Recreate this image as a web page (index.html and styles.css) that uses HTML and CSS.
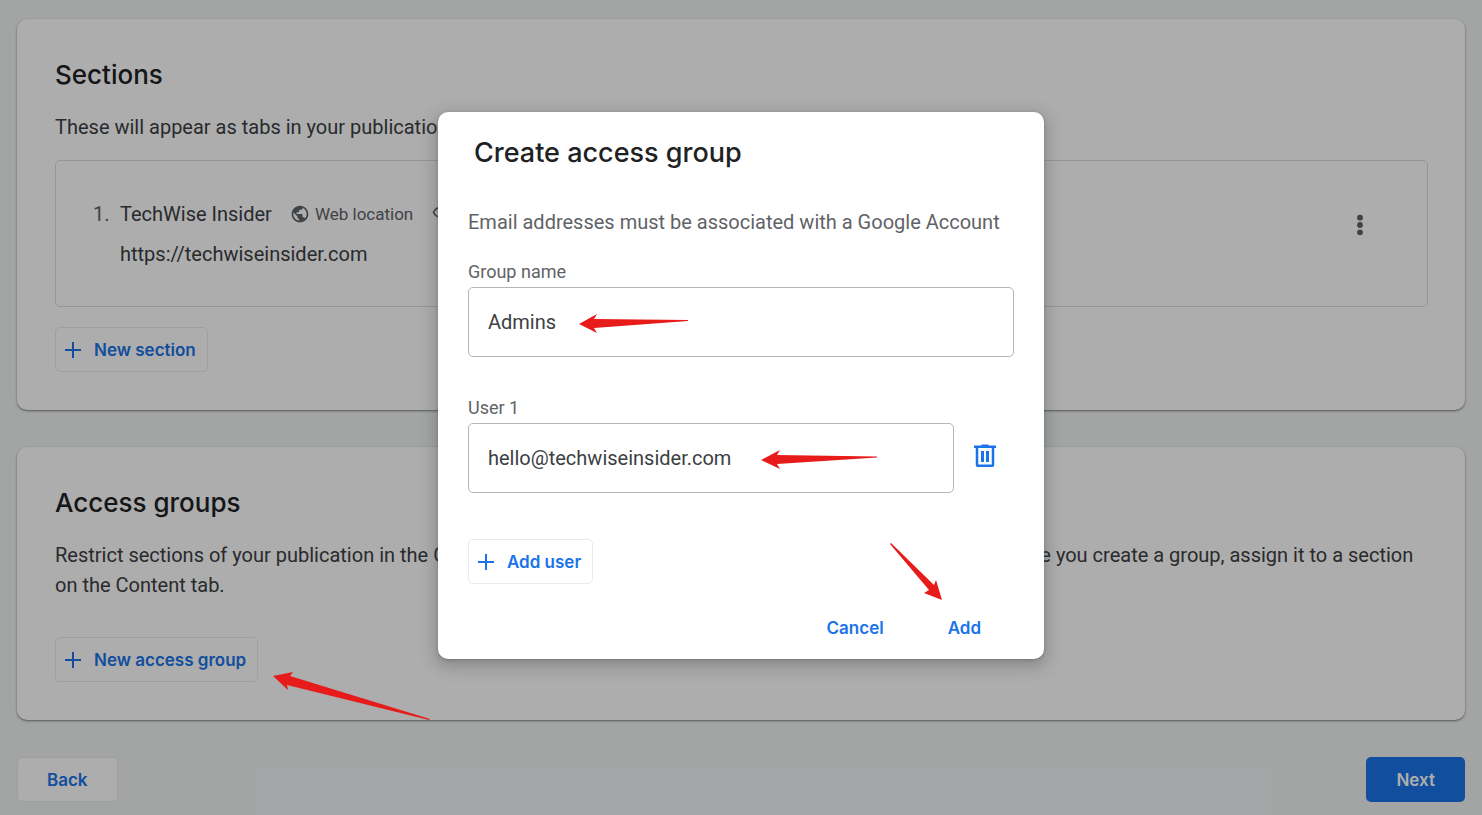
FILE: index.html
```html
<!DOCTYPE html>
<html lang="en">
<head>
<meta charset="utf-8">
<title>Publication settings</title>
<link rel="stylesheet" href="styles.css">
</head>
<body>
<main class="page">
  <section class="card">
    <h2 class="heading">Sections</h2>
    <p class="text">These will appear as tabs in your publication.</p>
    <div class="section-item">
      <span class="number">1.</span>
      <div class="section-info">
        <div class="section-line">
          <span class="section-name">TechWise Insider</span>
          <span class="meta">
            <svg class="meta-icon" viewBox="0 0 24 24"><path fill="currentColor" d="M12 2C6.48 2 2 6.48 2 12s4.48 10 10 10 10-4.48 10-10S17.52 2 12 2zm-1 17.93c-3.95-.49-7-3.85-7-7.93 0-.62.08-1.21.21-1.79L9 15v1c0 1.100.9 2 2 2v1.930zm6.900-2.540c-.26-.81-1-1.390-1.900-1.390h-1v-3c0-.55-.45-1-1-1H8v-2h2c.55 0 1-.45 1-1V7h2c1.100 0 2-.9 2-2v-.41c2.930 1.190 5 4.060 5 7.410 0 2.080-.8 3.970-2.100 5.390z"/></svg>
            Web location
          </span>
          <span class="meta">
            <svg class="meta-icon" viewBox="0 0 24 24"><path fill="none" stroke="currentColor" stroke-width="2" d="M3 10C5 6 8 4 12 4s7 2 9 6c-2 4-5 6-9 6s-7-2-9-6z"/><circle cx="12" cy="10" r="3" fill="currentColor"/></svg>
          </span>
        </div>
        <div class="section-name">https://techwiseinsider.com</div>
      </div>
      <button class="more" type="button" aria-label="More options">
        <svg class="more-icon" viewBox="0 0 24 24"><g fill="currentColor"><circle cx="12" cy="4" r="3.200"/><circle cx="12" cy="12" r="3.200"/><circle cx="12" cy="20" r="3.200"/></g></svg>
      </button>
    </div>
    <button class="button outlined with-icon" type="button">
      <svg class="plus" viewBox="0 0 16 16"><path d="M8 0v16M0 8h16" stroke="currentColor" stroke-width="2"/></svg>New section
    </button>
  </section>

  <section class="card">
    <h2 class="heading">Access groups</h2>
    <p class="text access-text">Restrict sections of your publication in the Google News app to a special group of people or invited testers. Once you create a group, assign it to a section on the Content tab.</p>
    <button class="button outlined with-icon" type="button">
      <svg class="plus" viewBox="0 0 16 16"><path d="M8 0v16M0 8h16" stroke="currentColor" stroke-width="2"/></svg>New access group
    </button>
  </section>

  <footer class="footer">
    <button class="button outlined" type="button">Back</button>
    <button class="button primary" type="button">Next</button>
  </footer>
</main>

<div class="overlay">
  <form class="dialog" role="dialog" aria-labelledby="dialog-title">
    <h2 class="heading dialog-title" id="dialog-title">Create access group</h2>
    <p class="text dialog-text">Email addresses must be associated with a Google Account</p>
    <label class="label" for="group">Group name</label>
    <div class="field-row">
      <input class="input" id="group" type="text" value="Admins">
      <svg class="arrow arrow-group" viewBox="0 0 110 20"><path d="M0 11 18 1 15 6 109 7 109 8 15 15 18 20Z"/></svg>
    </div>
    <label class="label user-label" for="user">User 1</label>
    <div class="field-row">
      <input class="input" id="user" type="email" value="hello@techwiseinsider.com">
      <button class="delete" type="button" aria-label="Remove user">
        <svg class="trash" viewBox="0 0 22 24"><path fill="none" stroke="currentColor" stroke-width="2.500" d="M3 3.500V20.500Q3 21.800 4.300 21.800H17.700Q19 21.800 19 20.500V3.500"/><path fill="currentColor" d="M0 1.500H7L8 .5H14L15 1.500H22V4H0ZM7 7H10V18H7ZM12 7H15V18H12Z"/></svg>
      </button>
      <svg class="arrow arrow-user" viewBox="0 0 116 20"><path d="M0 11 19 1 16 6 116 7.500 116 8.500 16 15 19 20Z"/></svg>
    </div>
    <button class="button outlined with-icon add-user" type="button">
      <svg class="plus" viewBox="0 0 16 16"><path d="M8 0v16M0 8h16" stroke="currentColor" stroke-width="2"/></svg>Add user
    </button>
    <div class="actions">
      <button class="button flat" type="button">Cancel</button>
      <button class="button flat" type="submit">Add</button>
      <svg class="arrow arrow-add" viewBox="0 0 52 57"><path d="M0 1 1 0 44 42 46 37 52 57 34 50 39 47Z"/></svg>
    </div>
  </form>
</div>
<svg class="arrow arrow-new" viewBox="0 0 158 50"><path d="M0 5 20 1 17 5 157 48 156 49 14 14 15 19Z"/></svg>
</body>
</html>
```
FILE: styles.css
```css
* { box-sizing: border-box; }

body {
  margin: 0;
  position: relative;
  background: #f1f3f4;
  color: #3c4043;
  font-family: Roboto, "Liberation Sans", sans-serif;
  font-size: 20px;
}

svg { display: block; flex: none; }

.page {
  display: flex;
  flex-direction: column;
  gap: 37px;
  padding: 19px 17px 13px;
}

.card {
  padding: 37px 37px 38px 38px;
  border-radius: 10px;
  background: #fff;
  box-shadow: 0 1px 2px rgba(60, 64, 67, .5), 0 1px 3px rgba(60, 64, 67, .2);
}

.heading {
  margin: 0;
  color: #202124;
  font: 500 26px/38px Inter, sans-serif;
}

.text {
  margin: 18px 0;
  line-height: 30px;
}

.access-text { margin-bottom: 37px; }

.section-item {
  display: flex;
  align-items: flex-start;
  margin-bottom: 20px;
  padding: 33px 46px 32px 37px;
  border: 1px solid #dadce0;
  border-radius: 5px;
  line-height: 40px;
}

.number {
  width: 27px;
  color: #5f6368;
}

.section-info { flex: 1; }

.section-line {
  display: flex;
  gap: 18px;
}

.meta {
  display: flex;
  align-items: center;
  gap: 5px;
  color: #5f6368;
  font-size: 17px;
}

.meta-icon {
  width: 20px;
  height: 20px;
}

.more {
  margin-top: 10px;
  padding: 10px;
  border: 0;
  background: none;
  color: #5f6368;
}

.more-icon {
  width: 22px;
  height: 22px;
}

.button {
  height: 45px;
  padding: 0 29px;
  border: 1px solid transparent;
  border-radius: 5px;
  background: none;
  color: #1a73e8;
  font: 600 17px/24px Inter, sans-serif;
}

.outlined {
  border-color: #e8eaed;
  background: #fff;
}

.with-icon {
  display: flex;
  align-items: center;
  gap: 13px;
  padding: 0 11px 0 9px;
}

.plus {
  width: 16px;
  height: 16px;
}

.primary {
  background: #1a73e8;
  color: #fff;
}

.footer {
  display: flex;
  justify-content: space-between;
}

.overlay {
  position: absolute;
  inset: 0;
  display: flex;
  justify-content: center;
  align-items: flex-start;
  padding-top: 112px;
  background: rgba(0, 0, 0, .32);
}

.dialog {
  width: 606px;
  padding: 22px 30px 9px;
  border-radius: 10px;
  background: #fff;
  box-shadow: 0 1px 3px rgba(60, 64, 67, .3), 0 5px 15px 3px rgba(60, 64, 67, .3);
}

.dialog-title {
  padding-left: 6px;
  font-size: 27px;
}

.dialog-text {
  margin: 35px 0 20px;
  color: #5f6368;
}

.label {
  display: block;
  color: #5f6368;
  font-size: 18px;
  line-height: 30px;
}

.user-label { margin-top: 36px; }

.field-row {
  position: relative;
  display: flex;
  align-items: center;
}

.input {
  flex: 1;
  min-width: 0;
  height: 70px;
  padding: 0 19px;
  border: 1px solid #b4b6b9;
  border-radius: 5px;
  background: #fff;
  color: #3c4043;
  font: inherit;
}

.delete {
  padding: 0 18px 4px 20px;
  border: 0;
  background: none;
  color: #1a73e8;
}

.trash {
  width: 22px;
  height: 24px;
}

.add-user { margin-top: 46px; }

.actions {
  position: relative;
  display: flex;
  justify-content: flex-end;
  gap: 14px;
  margin-top: 21px;
  padding-right: 8px;
}

.flat { padding: 0 24px; }

.arrow {
  position: absolute;
  fill: #e81b1b;
}

.arrow-group {
  top: 26px;
  left: 111px;
  width: 110px;
}

.arrow-user {
  top: 26px;
  left: 293px;
  width: 116px;
}

.arrow-add {
  top: -62px;
  right: 72px;
  width: 52px;
}

.arrow-new {
  top: 671px;
  left: 273px;
  width: 158px;
}
```
